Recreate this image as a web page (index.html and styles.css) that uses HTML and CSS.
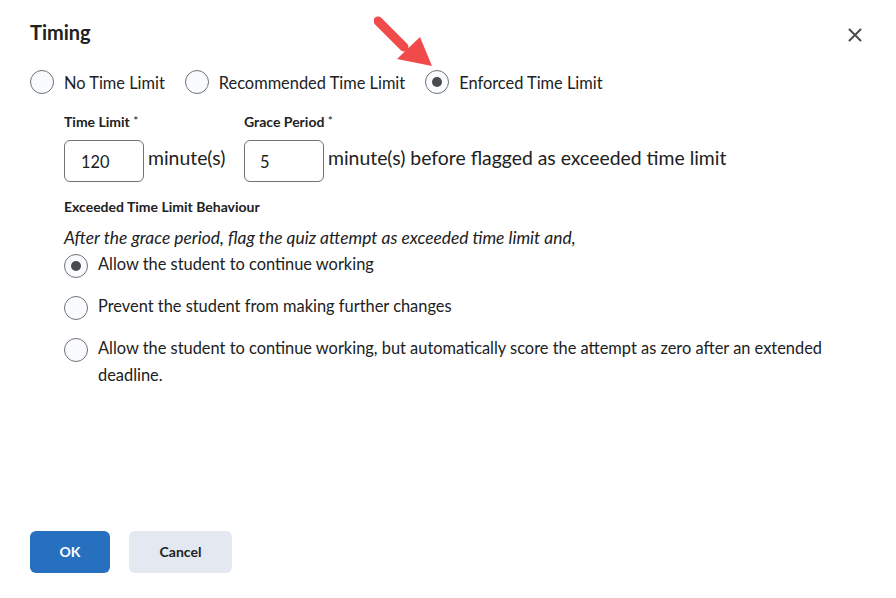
FILE: index.html
```html
<!DOCTYPE html>
<html>
<head>
<meta charset="utf-8">
<link rel="stylesheet" href="styles.css">
</head>
<body>
<div class="dialog">
  <div class="header">
    <h1 class="title">Timing</h1>
    <svg class="close" width="14" height="14" viewBox="0 0 14 14"><path d="M1.5 1.5 L12.5 12.5 M12.5 1.5 L1.5 12.5" stroke="#494c4e" stroke-width="2" stroke-linecap="round"/></svg>
  </div>
  <div class="modes">
    <label class="opt"><span class="radio"></span><span>No Time Limit</span></label>
    <label class="opt"><span class="radio"></span><span>Recommended Time Limit</span></label>
    <label class="opt"><span class="radio checked"></span><span>Enforced Time Limit</span></label>
    <svg class="arrow" width="70" height="60" viewBox="0 0 70 60"><path d="M4 6 L30 32" stroke="#f04a4a" stroke-width="9" stroke-linecap="round"/><polygon points="23,44 46,22 58,51" fill="#f04a4a"/></svg>
  </div>
  <div class="body">
    <div class="fields">
      <div class="field">
        <div class="flabel">Time Limit <span class="req">*</span></div>
        <div class="frow"><div class="input">120</div><span class="unit">minute(s)</span></div>
      </div>
      <div class="field">
        <div class="flabel">Grace Period <span class="req">*</span></div>
        <div class="frow"><div class="input small">5</div><span class="unit">minute(s) before flagged as exceeded time limit</span></div>
      </div>
    </div>
    <div class="section">Exceeded Time Limit Behaviour</div>
    <div class="hint">After the grace period, flag the quiz attempt as exceeded time limit and,</div>
    <div class="choices">
      <label class="choice"><span class="radio checked"></span><span>Allow the student to continue working</span></label>
      <label class="choice"><span class="radio"></span><span>Prevent the student from making further changes</span></label>
      <label class="choice"><span class="radio"></span><span>Allow the student to continue working, but automatically score the attempt as zero after an extended deadline.</span></label>
    </div>
  </div>
  <div class="footer">
    <button class="btn primary">OK</button>
    <button class="btn secondary">Cancel</button>
  </div>
</div>
</body>
</html>
```

FILE: styles.css
```css
* { box-sizing: border-box; }
html, body { margin: 0; padding: 0; background: #fff; }
body {
  font-family: Lato, "Noto Sans", sans-serif;
  color: #202122;
  width: 896px;
  height: 598px;
}
.dialog {
  padding: 0 30px;
  display: flex;
  flex-direction: column;
  height: 598px;
}
.header {
  display: flex;
  justify-content: space-between;
  align-items: center;
  padding-top: 13px;
  height: 50px;
}
.title {
  font-size: 20px;
  font-weight: 700;
  margin: 0;
  color: #202122;
  line-height: 24px;
}
.close { margin-right: 4px; margin-top: 6px; }
.modes {
  display: flex;
  align-items: center;
  gap: 20px;
  margin-top: 14px;
  position: relative;
}
.arrow { position: absolute; left: 344px; top: -49px; }
.opt, .choice {
  display: flex;
  align-items: center;
  gap: 10px;
  font-size: 16.4px;
  color: #202122;
}
.opt { height: 36px; }
.radio {
  width: 24px;
  height: 24px;
  border-radius: 50%;
  border: 1px solid #6e7376;
  background: #f9fbff;
  flex: none;
  display: flex;
  align-items: center;
  justify-content: center;
}
.radio.checked::after {
  content: "";
  width: 10px;
  height: 10px;
  border-radius: 50%;
  background: #494c4e;
}
.body { padding-left: 34px; margin-top: 13px; }
.fields { display: flex; gap: 4px; }
.field { display: flex; flex-direction: column; }
.field:first-child { width: 176px; }
.flabel { font-size: 14px; font-weight: 700; line-height: 17px; color: #202122; }
.req { font-weight: 400; font-size: 12px; position: relative; top: -2px; }
.frow { display: flex; align-items: flex-start; margin-top: 9px; }
.input {
  width: 80px;
  height: 42px;
  border: 1px solid #6e7376;
  border-radius: 6px;
  font-size: 16.4px;
  padding: 11px 0 0 16px;
  line-height: 20px;
}
.input.small { padding-left: 15px; }
.unit { font-size: 19.4px; margin-left: 4px; line-height: 24px; margin-top: 6px; }
.section { font-size: 14px; font-weight: 700; margin-top: 16px; line-height: 17px; }
.hint { font-size: 17.4px; font-style: italic; margin-top: 12px; line-height: 21px; color: #202122; }
.choices { display: flex; flex-direction: column; gap: 17px; margin-top: 5px; }
.choice { align-items: flex-start; line-height: 27px; padding-right: 20px; }
.choice .radio { margin-top: 1px; }
.choice span:last-child { margin-top: -3px; }
.footer {
  margin-top: auto;
  margin-bottom: 25px;
  display: flex;
  gap: 19px;
}
.btn {
  height: 42px;
  border: none;
  border-radius: 6px;
  font-family: Lato, "Noto Sans", sans-serif;
  font-size: 14px;
  font-weight: 700;
  padding-bottom: 2px;
}
.primary { background: #2670bf; color: #fff; width: 80px; }
.secondary { background: #e3e8f1; color: #202122; width: 103px; }
```
